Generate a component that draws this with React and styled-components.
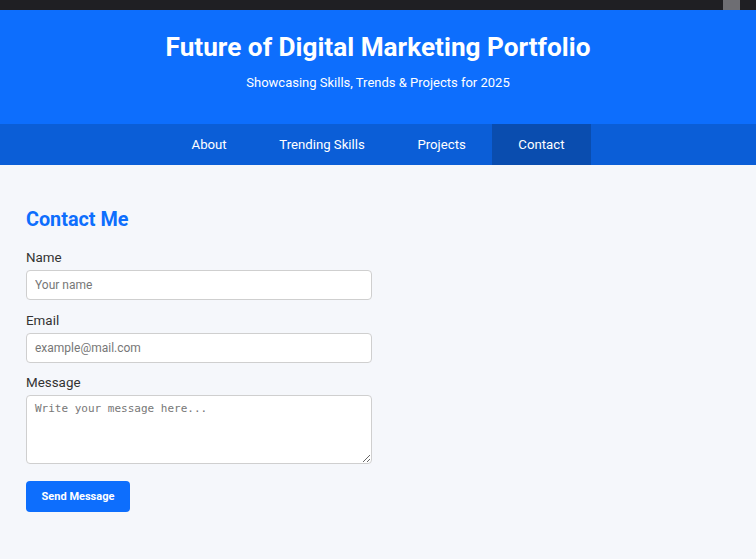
import React from 'react';
import styled, { createGlobalStyle } from 'styled-components';

const GlobalStyle = createGlobalStyle`
  body {
    margin: 0;
    background: #f5f7fb;
    font-family: Roboto, "Liberation Sans", Arial, sans-serif;
  }
`;

const TopStrip = styled.div`
  height: 10px;
  background: #1f1f23;
  display: flex;
  justify-content: flex-end;
`;

const StripThumb = styled.span`
  width: 17px;
  height: 10px;
  margin-right: 16px;
  background: #6e6e73;
`;

const Header = styled.header`
  background: #0d6efd;
  color: #fff;
  text-align: center;
  padding: 20px 0 33px;
`;

const Title = styled.h1`
  margin: 0;
  font-size: 26.2px;
  line-height: 34px;
  font-weight: 700;
`;

const Subtitle = styled.p`
  margin: 10px 0 0;
  font-size: 13px;
  line-height: 17px;
`;

const Nav = styled.nav`
  display: flex;
  justify-content: center;
  background: #0b5ed7;
`;

const NavItem = styled.a`
  display: block;
  padding: 0 26.3px;
  line-height: 41px;
  font-size: 13.2px;
  color: #fff;
  text-decoration: none;
  background: ${({ $active }) => ($active ? '#0a4daf' : 'transparent')};
`;

const Main = styled.main`
  padding: 43px 26px 40px;
`;

const Heading = styled.h2`
  margin: 0 0 17px;
  font-size: 19.8px;
  line-height: 24px;
  font-weight: 700;
  color: #0d6efd;
`;

const Form = styled.form`
  display: flex;
  flex-direction: column;
  width: 346px;
`;

const Field = styled.div`
  display: flex;
  flex-direction: column;
  margin-bottom: ${({ $last }) => ($last ? '17px' : '11.6px')};
`;

const Label = styled.label`
  font-size: 13.4px;
  line-height: 17px;
  color: #333;
  margin-bottom: 4px;
`;

const Input = styled.input`
  box-sizing: border-box;
  height: 30px;
  padding: 0 8px;
  border: 1px solid #cfcfcf;
  border-radius: 4px;
  background: #fff;
  font-family: Roboto, "Liberation Sans", Arial, sans-serif;
  font-size: 12px;
  &::placeholder {
    color: #777;
  }
`;

const TextArea = styled.textarea`
  box-sizing: border-box;
  height: 69px;
  padding: 6px 8px;
  border: 1px solid #cfcfcf;
  border-radius: 4px;
  background: #fff;
  font-family: "DejaVu Sans Mono", monospace;
  font-size: 11px;
  resize: vertical;
  &::placeholder {
    color: #777;
  }
`;

const Button = styled.button`
  align-self: flex-start;
  width: 104px;
  height: 31px;
  border: none;
  border-radius: 4px;
  background: #0d6efd;
  color: #fff;
  font-family: Roboto, "Liberation Sans", Arial, sans-serif;
  font-size: 11px;
  font-weight: 700;
`;

const links = ['About', 'Trending Skills', 'Projects', 'Contact'];

const App = () => (
  <>
    <GlobalStyle />
    <TopStrip>
      <StripThumb />
    </TopStrip>
    <Header>
      <Title>Future of Digital Marketing Portfolio</Title>
      <Subtitle>Showcasing Skills, Trends &amp; Projects for 2025</Subtitle>
    </Header>
    <Nav>
      {links.map(link => (
        <NavItem key={link} href="#" $active={link === 'Contact'}>
          {link}
        </NavItem>
      ))}
    </Nav>
    <Main>
      <Heading>Contact Me</Heading>
      <Form onSubmit={e => e.preventDefault()}>
        <Field>
          <Label>Name</Label>
          <Input placeholder="Your name" />
        </Field>
        <Field>
          <Label>Email</Label>
          <Input placeholder="example@mail.com" />
        </Field>
        <Field $last>
          <Label>Message</Label>
          <TextArea placeholder="Write your message here..." />
        </Field>
        <Button type="submit">Send Message</Button>
      </Form>
    </Main>
  </>
);

export default App;
